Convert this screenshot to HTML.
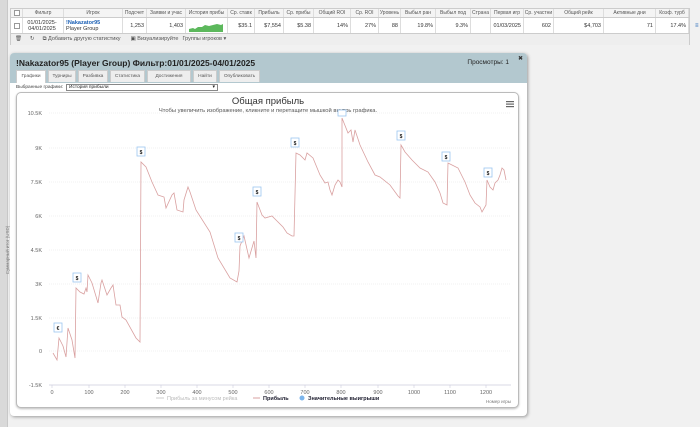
<!DOCTYPE html>
<html><head><meta charset="utf-8"><style>
*{margin:0;padding:0;box-sizing:border-box}
body{width:700px;height:427px;background:#f1f1f1;font-family:"Liberation Sans","DejaVu Sans",sans-serif;position:relative;overflow:hidden;color:#333}
.lbar{position:absolute;left:0;top:0;width:8px;height:427px;background:#d9d9d9;border-right:1px solid #c8c8c8}
.tbl{position:absolute;left:10px;top:8px;width:680px;height:37px;border:1px solid #ccc;background:#fff}
.hr{position:absolute;left:0;top:0;height:9px;width:100%;background:#f4f4f4;border-bottom:1px solid #ccc}
.dr{position:absolute;left:0;top:9px;height:16px;width:100%;background:#fff;border-bottom:1px solid #ccc}
.tb{position:absolute;left:0;top:25px;height:11px;width:100%;background:#eee;font-size:5.5px;color:#555;line-height:11px}
.c{position:absolute;top:0;height:100%;border-right:1px solid #ddd;font-size:5px;text-align:center;line-height:9px;white-space:nowrap;overflow:hidden;color:#555}
.d{position:absolute;top:0;height:100%;border-right:1px solid #ddd;font-size:5.5px;text-align:right;line-height:16px;padding-right:2px;white-space:nowrap;overflow:hidden;color:#333}
.cb{position:absolute;width:6px;height:6px;border:1px solid #999;background:#fff}
.dlg{position:absolute;left:10px;top:53px;width:517px;height:363px;background:#fff;border-radius:4px;box-shadow:1px 1px 3px #999;overflow:hidden}
.dh{position:absolute;left:0;top:0;width:100%;height:30px;background:#b3c8cf}
.title{position:absolute;left:6px;top:5px;font-size:8.5px;font-weight:bold;color:#222}
.views{position:absolute;right:18px;top:6px;font-size:6.5px;color:#222}
.x{position:absolute;right:4px;top:2px;font-size:6px;font-weight:bold}
.tab{position:absolute;top:17px;height:12px;background:#eee;border:1px solid #ccc;border-bottom:none;font-size:4.8px;line-height:11px;text-align:center;color:#555}
.chart{position:absolute;left:6px;top:39px;width:503px;height:316px;border:1px solid #bbb;border-radius:5px;background:#fff;box-shadow:0 1px 2px #bbb}
</style></head><body>
<div class="lbar"></div>
<div class="tbl">
 <div class="hr">
  <div class="c" style="left:0;width:12px"><div class="cb" style="left:3px;top:1px;width:6px;height:6px"></div></div>
  <div class="c" style="left:12px;width:41px">Фильтр</div>
  <div class="c" style="left:53px;width:59px">Игрок</div>
  <div class="c" style="left:112px;width:24px">Подсчет</div>
  <div class="c" style="left:136px;width:39px">Заявки и учас</div>
  <div class="c" style="left:175px;width:42px">История прибы</div>
  <div class="c" style="left:217px;width:27px">Ср. ставк</div>
  <div class="c" style="left:244px;width:29px">Прибыль</div>
  <div class="c" style="left:273px;width:30px">Ср. прибы</div>
  <div class="c" style="left:303px;width:37px">Общий ROI</div>
  <div class="c" style="left:340px;width:28px">Ср. ROI</div>
  <div class="c" style="left:368px;width:22px">Уровень</div>
  <div class="c" style="left:390px;width:35px">Выбыл ран</div>
  <div class="c" style="left:425px;width:35px">Выбыл под</div>
  <div class="c" style="left:460px;width:20px">Страна</div>
  <div class="c" style="left:480px;width:33px">Первая игр</div>
  <div class="c" style="left:513px;width:30px">Ср. участни</div>
  <div class="c" style="left:543px;width:50px">Общий рейк</div>
  <div class="c" style="left:593px;width:52px">Активные дни</div>
  <div class="c" style="left:645px;width:33px">Коэф. турб</div>
 </div>
 <div class="dr">
  <div class="d" style="left:0;width:12px"><div class="cb" style="left:3px;top:5px"></div></div>
  <div class="d" style="left:12px;width:41px;text-align:center;line-height:6px;padding-top:2px;font-size:5.5px">01/01/2025-<br>04/01/2025</div>
  <div class="d" style="left:53px;width:59px;text-align:left;padding-left:2px;line-height:6px;padding-top:2px"><b style="color:#1a5fb4">!Nakazator95</b><br>Player Group</div>
  <div class="d" style="left:112px;width:24px">1,253</div>
  <div class="d" style="left:136px;width:39px">1,403</div>
  <div class="d" style="left:175px;width:42px"><svg width="40" height="16" style="position:absolute;left:1px;top:0"><path d="M2 14 L2 11 L6 10 L8 11 L11 9 L15 9 L18 7 L22 8 L26 7 L30 6 L34 7 L36 6 L36 14 Z" fill="#5cb85c"/></svg></div>
  <div class="d" style="left:217px;width:27px">$35.1</div>
  <div class="d" style="left:244px;width:29px">$7,554</div>
  <div class="d" style="left:273px;width:30px">$5.38</div>
  <div class="d" style="left:303px;width:37px">14%</div>
  <div class="d" style="left:340px;width:28px">27%</div>
  <div class="d" style="left:368px;width:22px">88</div>
  <div class="d" style="left:390px;width:35px">19.8%</div>
  <div class="d" style="left:425px;width:35px">9.3%</div>
  <div class="d" style="left:460px;width:20px"></div>
  <div class="d" style="left:480px;width:33px">01/03/2025</div>
  <div class="d" style="left:513px;width:30px">602</div>
  <div class="d" style="left:543px;width:50px">$4,703</div>
  <div class="d" style="left:593px;width:52px">71</div>
  <div class="d" style="left:645px;width:33px">17.4%</div>
  <div style="position:absolute;left:684px;top:5px;font-size:6px;color:#1a5fb4">≡</div>
 </div>
 <div class="tb"><span style="margin-left:4px">🗑</span><span style="margin-left:8px">↻</span><span style="margin-left:8px">⧉ Добавить другую статистику</span><span style="margin-left:10px">▣ Визуализируйте</span><span style="margin-left:4px">Группы игроков ▾</span></div>
</div>

<div class="dlg">
 <div class="dh"></div>
 <div class="title">!Nakazator95 (Player Group) Фильтр:01/01/2025-04/01/2025</div>
 <div class="views">Просмотры: 1</div>
 <div class="x">✖</div>
 <div class="tab" style="left:6px;width:30px;background:#fff;height:13px">Графики</div>
 <div class="tab" style="left:38px;width:28px">Турниры</div>
 <div class="tab" style="left:68px;width:30px">Разбивка</div>
 <div class="tab" style="left:100px;width:35px">Статистика</div>
 <div class="tab" style="left:137px;width:44px">Достижения</div>
 <div class="tab" style="left:183px;width:24px">Найти</div>
 <div class="tab" style="left:209px;width:41px">Опубликовать</div>
 <div style="position:absolute;left:6px;top:32px;font-size:4.8px;color:#444">Выбранные графики:</div>
 <div style="position:absolute;left:56px;top:31px;width:152px;height:7px;border:1px solid #888;font-size:4.8px;line-height:5px;padding-left:2px;color:#222">История прибыли<span style="position:absolute;right:2px;top:0;font-size:5px">▾</span></div>
 <div class="chart"></div>
</div>

<svg width="700" height="427" style="position:absolute;left:0;top:0" font-family="Liberation Sans, DejaVu Sans, sans-serif">
 <text x="268" y="104" font-size="9.5" fill="#333" text-anchor="middle">Общая прибыль</text>
 <text x="268" y="112" font-size="5.8" fill="#555" text-anchor="middle">Чтобы увеличить изображение, кликните и перетащите мышкой внутрь графика.</text>
 <g fill="#666"><rect x="506" y="101" width="8" height="1.2"/><rect x="506" y="103.5" width="8" height="1.2"/><rect x="506" y="106" width="8" height="1.2"/></g>
 <g stroke="#e6e6e6" stroke-width="0.6" stroke-dasharray="1,1">
  <line x1="49" y1="113" x2="511" y2="113"/><line x1="49" y1="148" x2="511" y2="148"/><line x1="49" y1="182" x2="511" y2="182"/><line x1="49" y1="216" x2="511" y2="216"/><line x1="49" y1="250" x2="511" y2="250"/><line x1="49" y1="284" x2="511" y2="284"/><line x1="49" y1="318" x2="511" y2="318"/><line x1="49" y1="351" x2="511" y2="351"/>
 </g>
 <line x1="49" y1="385" x2="511" y2="385" stroke="#ccd" stroke-width="0.8"/>
 <g font-size="5.5" fill="#666" text-anchor="end">
  <text x="42" y="115">10.5K</text><text x="42" y="150">9K</text><text x="42" y="184">7.5K</text><text x="42" y="218">6K</text><text x="42" y="252">4.5K</text><text x="42" y="286">3K</text><text x="42" y="320">1.5K</text><text x="42" y="353">0</text><text x="42" y="387">-1.5K</text>
 </g>
 <text x="9" y="250" font-size="4.5" fill="#777" transform="rotate(-90 9 250)" text-anchor="middle">Суммарный итог (USD)</text>
 <g font-size="5.5" fill="#666" text-anchor="middle">
  <text x="52" y="394">0</text><text x="89" y="394">100</text><text x="125" y="394">200</text><text x="161" y="394">300</text><text x="197" y="394">400</text><text x="233" y="394">500</text><text x="269" y="394">600</text><text x="305" y="394">700</text><text x="341" y="394">800</text><text x="378" y="394">900</text><text x="414" y="394">1000</text><text x="450" y="394">1100</text><text x="486" y="394">1200</text>
 </g>
 <g stroke="#ccd" stroke-width="0.6"><line x1="52" y1="385" x2="52" y2="388"/><line x1="89" y1="385" x2="89" y2="388"/><line x1="125" y1="385" x2="125" y2="388"/><line x1="161" y1="385" x2="161" y2="388"/><line x1="197" y1="385" x2="197" y2="388"/><line x1="233" y1="385" x2="233" y2="388"/><line x1="269" y1="385" x2="269" y2="388"/><line x1="305" y1="385" x2="305" y2="388"/><line x1="341" y1="385" x2="341" y2="388"/><line x1="378" y1="385" x2="378" y2="388"/><line x1="414" y1="385" x2="414" y2="388"/><line x1="450" y1="385" x2="450" y2="388"/><line x1="486" y1="385" x2="486" y2="388"/></g>
 <text x="511" y="403" font-size="4.5" fill="#777" text-anchor="end">Номер игры</text>
 <polyline fill="none" stroke="#d9a0a0" stroke-width="0.8" points="53,353 57,360 59,338 63,346 66,357 68,328 72,340 75,358 76,288 80,292 84,294 86,288 87,292 88,275 92,283 98,303 101,283 102,280 107,295 111,288 113,285 116,305 120,305 122,317 126,320 136,338 140,342 141,162 146,167 152,182 158,195 164,197 166,208 172,195 174,193 177,210 183,212 184,200 188,187 190,192 196,210 210,232 218,258 230,278 237,282 239,271 240,246 244,236 249,258 254,241 256,258 257,202 262,215 265,218 272,216 277,221 283,227 287,233 292,236 294,236 296,153 300,155 305,160 307,153 313,158 320,175 325,183 328,182 330,190 332,195 335,185 338,180 340,182 342,187 342,118 348,133 351,130 353,142 355,130 360,145 368,162 375,175 380,177 390,185 398,196 400,198 401,145 405,152 412,160 420,168 428,172 435,182 440,193 443,203 447,205 448,163 452,165 458,168 465,182 470,195 475,203 480,207 482,212 486,205 487,180 490,187 493,190 495,183 498,180 500,175 502,168 504,170 506,180"/>
 <g font-size="5" font-weight="bold" text-anchor="middle" fill="#222">
  <g stroke="#9cc6f0" stroke-width="0.8" fill="#fff"><rect x="54" y="323" width="8" height="9"/><rect x="73" y="273" width="8" height="9"/><rect x="137" y="147" width="8" height="9"/><rect x="235" y="233" width="8" height="9"/><rect x="253" y="187" width="8" height="9"/><rect x="291" y="138" width="8" height="9"/><rect x="338" y="110" width="8" height="6"/><rect x="397" y="131" width="8" height="9"/><rect x="442" y="152" width="8" height="9"/><rect x="484" y="168" width="8" height="9"/></g>
  <text x="58" y="330">€</text><text x="77" y="280">$</text><text x="141" y="154">$</text><text x="239" y="240">$</text><text x="257" y="194">$</text><text x="295" y="145">$</text><text x="401" y="138">$</text><text x="446" y="159">$</text><text x="488" y="175">$</text>
 </g>
 <g font-size="5.5">
  <line x1="156" y1="398" x2="164" y2="398" stroke="#ccc"/><text x="167" y="400" fill="#bbb">Прибыль за минусом рейка</text>
  <line x1="253" y1="398" x2="260" y2="398" stroke="#d9a0a0"/><text x="263" y="400" fill="#223" font-weight="bold">Прибыль</text>
  <circle cx="302" cy="398" r="2.5" fill="#7cb5ec"/><text x="308" y="400" fill="#223" font-weight="bold">Значительные выигрыши</text>
 </g>
</svg>
</body></html>
